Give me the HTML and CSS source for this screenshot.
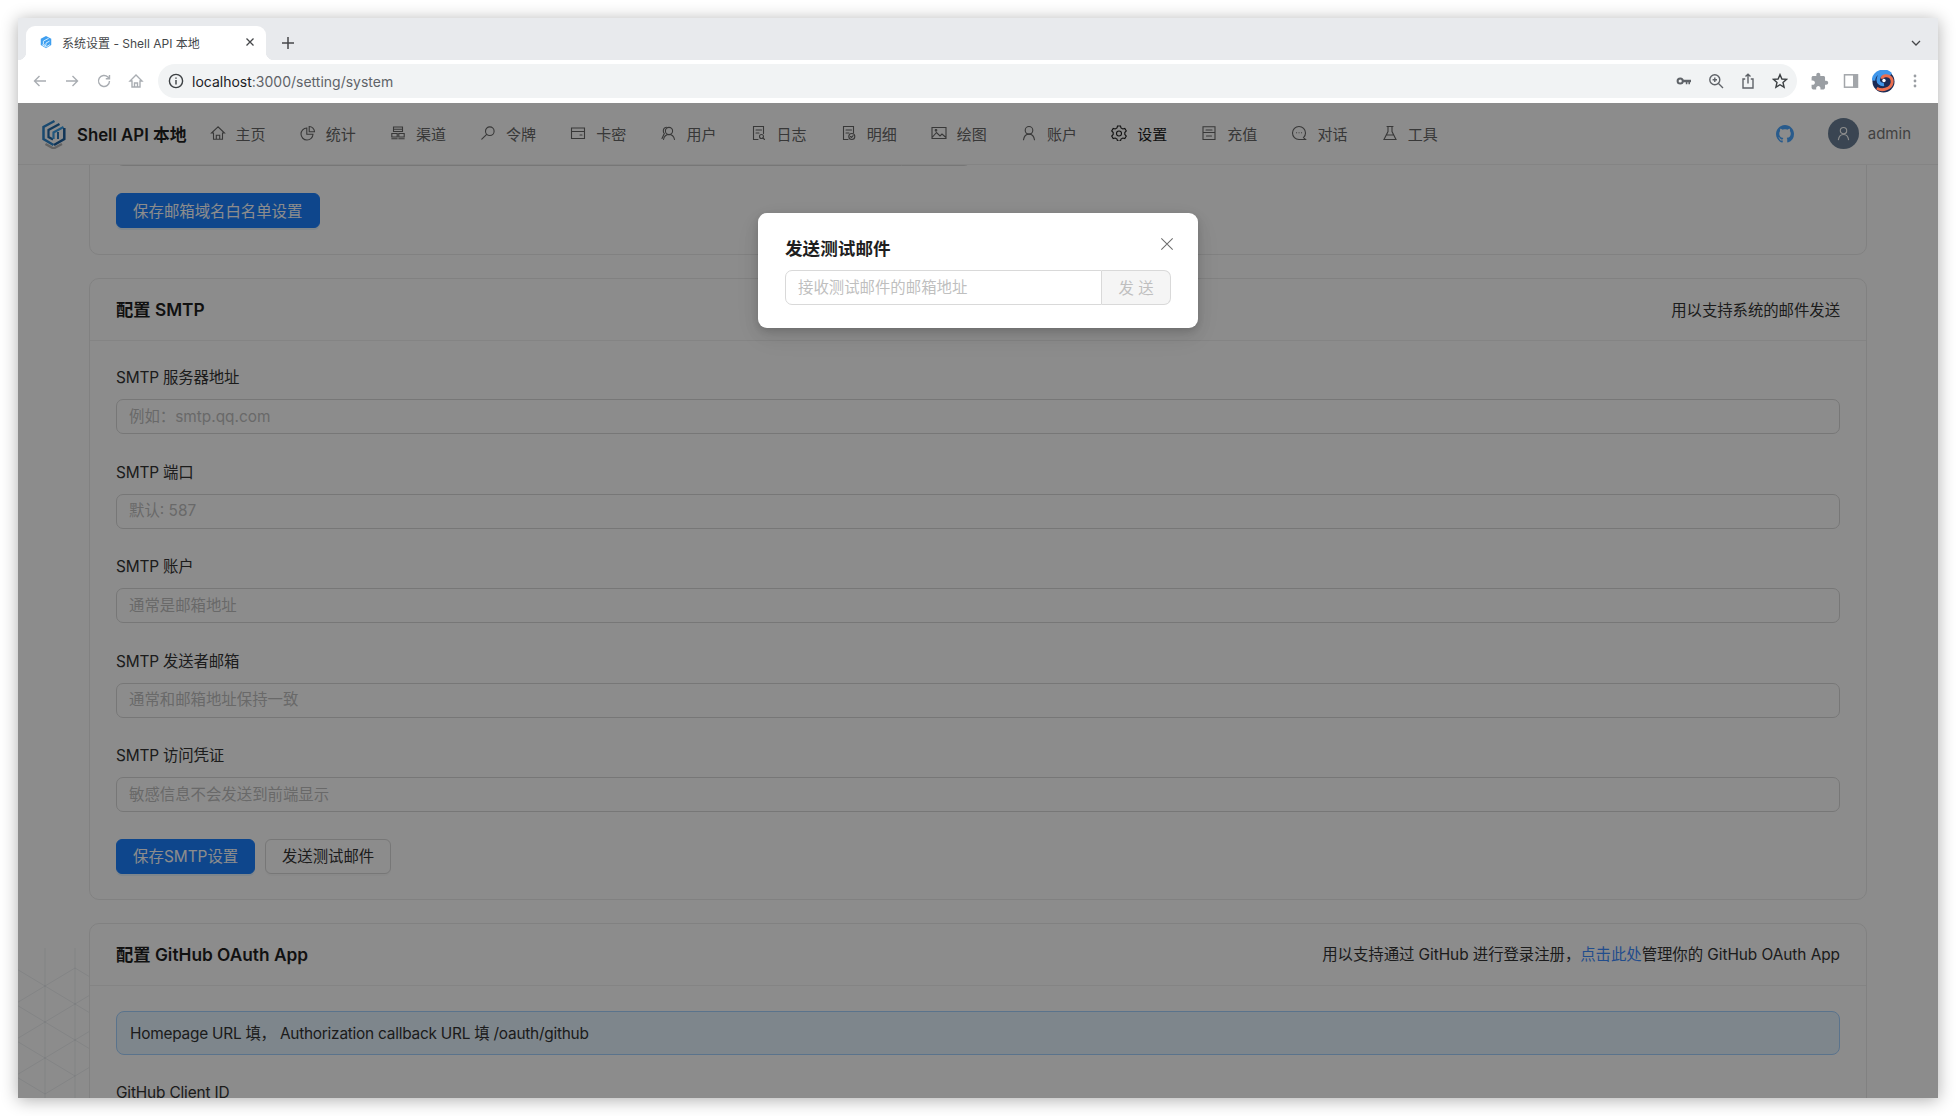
FILE: index.html
```html
<!DOCTYPE html>
<html lang="zh">
<head>
<meta charset="utf-8">
<title>系统设置 - Shell API 本地</title>
<link rel="stylesheet" href="styles.css">
</head>
<body>
<div class="window">
  <div class="tabstrip">
    <div class="tab">
      <svg class="favicon" viewBox="0 0 16 16"><path d="M8 1l6 3.4v7L8 15l-6-3.6v-7z" fill="#3f9ff0"/><path d="M11 3.800L5 7v3.500l3 1.800M12 7l-4 2.200V12M3.500 11l4.500 2.800 4.500-2.800" fill="none" stroke="#d8f0ff" stroke-width="1.100"/></svg>
      <span class="tab-title">系统设置 - Shell API 本地</span>
      <svg class="tab-close" viewBox="0 0 10 10"><path d="M1.500 1.500l7 7M8.500 1.500l-7 7" stroke="#45474a" stroke-width="1.300" fill="none"/></svg>
    </div>
    <svg class="tab-new" viewBox="0 0 14 14"><path d="M7 1v12M1 7h12" stroke="#45474a" stroke-width="1.500" fill="none"/></svg>
    <svg class="tab-more" viewBox="0 0 12 12"><path d="M2 4l4 4 4-4" stroke="#45474a" stroke-width="1.300" fill="none"/></svg>
  </div>

  <div class="toolbar">
    <span class="tool"><svg viewBox="0 0 16 16"><path d="M14 8H2.500M7.500 3L2.500 8l5 5" class="ln-off"/></svg></span>
    <span class="tool"><svg viewBox="0 0 16 16"><path d="M2 8h11.500M8.500 3l5 5-5 5" class="ln-off"/></svg></span>
    <span class="tool"><svg viewBox="0 0 16 16"><path d="M13.500 8a5.500 5.500 0 1 1-1.600-3.900L13.500 5.700M13.500 2v3.700H9.800" class="ln-off"/></svg></span>
    <span class="tool"><svg viewBox="0 0 16 16"><path d="M8 2L2 8h2v6h8V8h2zM6.500 14V10h3v4" class="ln-off"/></svg></span>
    <div class="omnibox">
      <svg class="info" viewBox="0 0 16 16"><circle cx="8" cy="8" r="6.600" class="ln-dark"/><path d="M8 7v4.400M8 4.400v1.400" class="ln-dark"/></svg>
      <span class="url">localhost<span class="url-rest">:3000/setting/system</span></span>
      <span class="tool"><svg viewBox="0 0 16 16"><circle cx="4.200" cy="8" r="2.600" fill="none" stroke="#5f6368" stroke-width="2"/><path d="M6.500 6.800H15v2.400h-1v2h-1.600v-2h-1v2H9.800v-2H6.500z" fill="#5f6368"/></svg></span>
      <span class="tool"><svg viewBox="0 0 16 16"><circle cx="6.800" cy="6.800" r="5" class="ln-mid"/><path d="M10.500 10.500L15 15M6.800 4.600v4.400M4.600 6.800H9" class="ln-mid"/></svg></span>
      <span class="tool"><svg viewBox="0 0 16 16"><path d="M5.200 6H3v9h10V6h-2.200M8 10.500V1.200M5.500 3.600L8 1.200l2.500 2.400" class="ln-mid"/></svg></span>
      <span class="tool"><svg viewBox="0 0 16 16"><path d="M8 1.600l1.900 4.400 4.700.4-3.600 3.100 1.100 4.700L8 11.700l-4.100 2.500L5 9.500 1.400 6.400l4.700-.4z" class="ln-dark"/></svg></span>
    </div>
    <span class="tool"><svg class="puzzle" viewBox="0 0 24 24"><path fill="#9a9ea3" d="M20.500 11H19V7c0-1.100-.9-2-2-2h-4V3.500C13 2.120 11.880 1 10.500 1S8 2.120 8 3.500V5H4c-1.100 0-1.990.9-1.990 2v3.800H3.500c1.490 0 2.700 1.210 2.700 2.700s-1.210 2.700-2.700 2.700H2V20c0 1.100.9 2 2 2h3.800v-1.500c0-1.490 1.210-2.700 2.700-2.700 1.490 0 2.700 1.210 2.700 2.700V22H17c1.100 0 2-.9 2-2v-4h1.500c1.380 0 2.500-1.120 2.500-2.500S21.880 11 20.500 11z"/></svg></span>
    <span class="tool"><svg viewBox="0 0 16 16"><rect x="1.500" y="1.800" width="13" height="12.400" fill="none" stroke="#a3a6aa" stroke-width="1.500"/><rect x="10" y="1.800" width="4.500" height="12.400" fill="#a3a6aa"/></svg></span>
    <span class="tool"><svg class="profile" viewBox="0 0 24 24"><circle cx="12" cy="12" r="11.500" fill="#1b2b55"/><path d="M1.500 11a10.500 10.500 0 0 1 18-6.500C14 2 7 4 6.500 10c-.2 3 2.500 5.500 6 5" fill="none" stroke="#3f96ea" stroke-width="3.600"/><path d="M5 19c6 3.500 15 .5 16-6 .6-4.500-3-7.500-7-7-2 .3-3.500 1.500-3.500 3" fill="none" stroke="#ec6f4e" stroke-width="3"/><circle cx="12.500" cy="11" r="1.800" fill="#fff"/></svg></span>
    <span class="tool"><svg viewBox="0 0 16 16"><circle cx="8" cy="3" r="1.400" fill="#9a9ea3"/><circle cx="8" cy="8" r="1.400" fill="#9a9ea3"/><circle cx="8" cy="13" r="1.400" fill="#9a9ea3"/></svg></span>
  </div>

  <div class="viewport">
    <svg class="decor" viewBox="0 0 72 150">
      <path d="M27 0v150M57 0v150M-3 20l30 18 30-18 30 18M-3 56l30-18 30 18 30-18M-3 56l30 18 30-18 30 18M-3 92l30-18 30 18 30-18M-3 92l30 18 30-18 30 18M-3 128l30-18 30 18 30-18M-3 128l30 18 30-18" fill="none" stroke="#8a93a3" stroke-opacity=".14"/>
    </svg>

    <header class="nav">
      <div class="brand">
        <svg class="logo" viewBox="0 0 26 30">
          <path d="M5 25l8 4.500 8.500-4.500" fill="none" stroke="#b4b4b4" stroke-width="2.400"/>
          <path d="M14 2L3 8v12l10 6" fill="none" stroke="#2f86cc" stroke-width="2.500"/>
          <path d="M19 5L8 11v7l4.500 2.500" fill="none" stroke="#2068a8" stroke-width="2.200"/>
          <path d="M23 8l-10 5.500V20" fill="none" stroke="#3b9ee6" stroke-width="2.200"/>
          <path d="M23.800 9v11L13.500 26" fill="none" stroke="#1f619e" stroke-width="2.500"/>
          <path d="M17.500 13v7" fill="none" stroke="#2a78ba" stroke-width="2"/>
        </svg>
        <span class="brand-name">Shell API 本地</span>
      </div>
      <nav class="menu">
        <a class="menu-item"><svg viewBox="0 0 16 16"><path d="M8 1.800L1.500 8h2v6.200h9V8h2zM6.300 14.200v-4h3.400v4"/></svg>主页</a>
        <a class="menu-item"><svg viewBox="0 0 16 16"><path d="M6.800 3a6 6 0 1 0 6.200 6.200H6.800zM9.200 1.500v5.300h5.300a5.300 5.300 0 0 0-5.300-5.300z"/></svg>统计</a>
        <a class="menu-item"><svg viewBox="0 0 16 16"><path d="M3.500 2h9v4.500h-9zM3.500 4.200h9M1.800 8.500h5.400v3.500H1.800zM8.800 8.500h5.400v3.500H8.800zM1.800 13.800h5.400M8.800 13.800h5.400"/></svg>渠道</a>
        <a class="menu-item"><svg viewBox="0 0 16 16"><circle cx="9.800" cy="6.200" r="4.300"/><path d="M6.700 9.300L1.800 14.200"/></svg>令牌</a>
        <a class="menu-item"><svg viewBox="0 0 16 16"><path d="M1.500 3h13v10.500h-13zM1.500 6.500h13M10 10h2"/></svg>卡密</a>
        <a class="menu-item"><svg viewBox="0 0 16 16"><circle cx="9" cy="6" r="3.600"/><path d="M3.500 14.500c.6-3 2.700-5 5.500-5s4.900 2 5.500 5M6.500 2.200C4.500 2.500 3.300 4 3.300 6c0 1 .4 1.900 1 2.600L2 13.500"/></svg>用户</a>
        <a class="menu-item"><svg viewBox="0 0 16 16"><path d="M7 14.500H2.500v-13h10v7M5 5h5.500M5 8h3"/><circle cx="10.500" cy="11.500" r="2"/><path d="M12 13l1.500 1.500"/></svg>日志</a>
        <a class="menu-item"><svg viewBox="0 0 16 16"><path d="M7 14.500H2.500v-13h10v6.500M5 5h5.500M5 8h3"/><circle cx="10.800" cy="11.500" r="3"/><path d="M9.500 11.500l1 1 1.600-1.800"/></svg>明细</a>
        <a class="menu-item"><svg viewBox="0 0 16 16"><path d="M1 2.500h14v11H1zM1.500 12l4-4.500 3.500 3.500 2-2 4 3.500"/><circle cx="5" cy="5.300" r=".8"/></svg>绘图</a>
        <a class="menu-item"><svg viewBox="0 0 16 16"><circle cx="8" cy="5.300" r="3.800"/><path d="M2.500 14.800c.5-3.200 2.700-5.700 5.500-5.700s5 2.500 5.500 5.700"/></svg>账户</a>
        <a class="menu-item is-active"><svg viewBox="0 0 16 16"><path d="M6.500 1h3l.5 2 1.800 1 2-.6 1.500 2.600-1.500 1.500v2l1.500 1.500-1.500 2.600-2-.6-1.800 1-.5 2h-3l-.5-2-1.800-1-2 .6L.7 11l1.500-1.500v-2L.7 6l1.500-2.600 2 .6L6 3z"/><circle cx="8" cy="8.500" r="2.500"/></svg>设置</a>
        <a class="menu-item"><svg viewBox="0 0 16 16"><path d="M2 1.800h12v12.700H2zM2 7.500h12M5 5h6M5.500 11h5"/></svg>充值</a>
        <a class="menu-item"><svg viewBox="0 0 16 16"><path d="M14.500 14.500H8a6.500 6.500 0 1 1 6.500-6.500c0 2-.8 3.500-2 4.600z"/><path d="M5.500 7.800h.1M8 7.800h.1M10.500 7.800h.1"/></svg>对话</a>
        <a class="menu-item"><svg viewBox="0 0 16 16"><path d="M5 1.500h6M6 1.500v5L2 14.500h12l-4-8v-5M4.500 10h7"/></svg>工具</a>
      </nav>
      <div class="nav-right">
        <svg class="github" viewBox="0 0 16 16"><path fill="currentColor" d="M8 0C3.580 0 0 3.580 0 8c0 3.540 2.290 6.530 5.470 7.590.4.070.55-.17.55-.38 0-.19-.01-.82-.01-1.490-2.010.37-2.530-.49-2.690-.94-.09-.23-.48-.94-.82-1.130-.28-.15-.68-.52-.01-.53.63-.01 1.080.58 1.230.82.720 1.210 1.870.870 2.330.660.070-.520.280-.870.510-1.070-1.780-.200-3.640-.890-3.640-3.950 0-.870.310-1.590.820-2.150-.080-.200-.360-1.020.080-2.120 0 0 .670-.210 2.200.820.640-.180 1.320-.270 2-.270s1.360.090 2 .270c1.530-1.040 2.200-.820 2.200-.820.440 1.100.160 1.920.080 2.120.510.560.820 1.270.820 2.150 0 3.070-1.870 3.750-3.650 3.950.290.250.540.730.540 1.480 0 1.070-.010 1.930-.010 2.200 0 .210.150.460.550.380A8.010 8.010 0 0 0 16 8c0-4.420-3.580-8-8-8z"/></svg>
        <span class="avatar"><svg viewBox="0 0 16 16"><circle cx="8" cy="5" r="3.400"/><path d="M2.500 15c.4-3.400 2.600-6 5.500-6s5.100 2.600 5.500 6"/></svg></span>
        <span class="username">admin</span>
      </div>
    </header>

    <main class="content">
      <section class="card card-clipped">
        <div class="card-body">
          <div class="input-group group-short">
            <input class="input group-input" type="text">
            <span class="group-addon"></span>
          </div>
          <div class="actions">
            <button class="btn btn-primary" type="button">保存邮箱域名白名单设置</button>
          </div>
        </div>
      </section>

      <section class="card">
        <div class="card-header">
          <h2 class="card-title">配置 SMTP</h2>
          <span class="card-extra">用以支持系统的邮件发送</span>
        </div>
        <div class="card-body">
          <div class="field"><label class="label">SMTP 服务器地址</label><input class="input" type="text" placeholder="例如：smtp.qq.com"></div>
          <div class="field"><label class="label">SMTP 端口</label><input class="input" type="text" placeholder="默认: 587"></div>
          <div class="field"><label class="label">SMTP 账户</label><input class="input" type="text" placeholder="通常是邮箱地址"></div>
          <div class="field"><label class="label">SMTP 发送者邮箱</label><input class="input" type="text" placeholder="通常和邮箱地址保持一致"></div>
          <div class="field"><label class="label">SMTP 访问凭证</label><input class="input" type="text" placeholder="敏感信息不会发送到前端显示"></div>
          <div class="actions">
            <button class="btn btn-primary" type="button">保存SMTP设置</button>
            <button class="btn btn-default" type="button">发送测试邮件</button>
          </div>
        </div>
      </section>

      <section class="card">
        <div class="card-header">
          <h2 class="card-title">配置 GitHub OAuth App</h2>
          <span class="card-extra">用以支持通过 GitHub 进行登录注册，<a class="link">点击此处</a>管理你的 GitHub OAuth App</span>
        </div>
        <div class="card-body">
          <div class="banner">Homepage URL 填， Authorization callback URL 填 /oauth/github</div>
          <div class="field"><label class="label">GitHub Client ID</label></div>
        </div>
      </section>
    </main>

    <div class="overlay">
      <div class="modal">
        <svg class="modal-close" viewBox="0 0 16 16"><path d="M1.500 1.500l13 13M14.500 1.500l-13 13" stroke="#6e6e6e" stroke-width="1.200" fill="none"/></svg>
        <h3 class="modal-title">发送测试邮件</h3>
        <div class="input-group">
          <input class="input group-input" type="text" placeholder="接收测试邮件的邮箱地址">
          <span class="group-addon">发 送</span>
        </div>
      </div>
    </div>
  </div>
</div>
</body>
</html>
```

FILE: styles.css
```css
* { box-sizing: border-box; }

html, body { margin: 0; height: 100%; }

body {
  padding: 18px;
  background: #fff;
  font-family: Inter, "Noto Sans CJK SC", sans-serif;
  font-size: 15.4px;
  color: #333;
  overflow: hidden;
}

.window {
  width: 1920px;
  height: 1080px;
  display: flex;
  flex-direction: column;
  overflow: hidden;
  box-shadow: 0 2px 16px rgba(0, 0, 0, .32);
}

/* Browser chrome */
.tabstrip {
  height: 42px;
  flex: none;
  display: flex;
  align-items: flex-end;
  padding-left: 8px;
  background: #e8eaed;
}

.tab {
  position: relative;
  width: 240px;
  height: 34px;
  display: flex;
  align-items: center;
  padding: 0 10px 2px 14px;
  background: #fff;
  border-radius: 9px 9px 0 0;
}

.tab::before,
.tab::after {
  content: "";
  position: absolute;
  bottom: 0;
  width: 8px;
  height: 8px;
}

.tab::before { left: -8px; background: radial-gradient(circle at 0 0, #e8eaed 8px, #fff 8.5px); }
.tab::after { right: -8px; background: radial-gradient(circle at 100% 0, #e8eaed 8px, #fff 8.5px); }

.favicon { width: 14px; height: 16px; flex: none; margin-left: -1px; }

.tab-title {
  flex: 1;
  margin-left: 9px;
  font-size: 12px;
  color: #45474a;
  white-space: nowrap;
}

.tab-close { width: 10px; height: 10px; flex: none; margin-right: 1px; }
.tab-new { width: 14px; height: 14px; flex: none; margin: 0 0 10px 15px; }
.tab-more { width: 12px; height: 12px; flex: none; margin: 0 16px 11px auto; }

.toolbar {
  height: 43px;
  flex: none;
  display: flex;
  align-items: flex-start;
  padding: 4px 6px 0;
  background: #fff;
}

.tool {
  width: 32px;
  height: 34px;
  flex: none;
  display: flex;
  align-items: center;
  justify-content: center;
}

.tool svg { width: 16px; height: 16px; }
.tool .profile { width: 23px; height: 23px; }
.tool .puzzle { width: 19px; height: 19px; }

.omnibox {
  width: 1639px;
  height: 34px;
  flex: none;
  display: flex;
  align-items: center;
  margin: 0 6px;
  padding: 0 1px 0 10px;
  background: #f1f3f4;
  border-radius: 17px;
}

.info { width: 16px; height: 16px; flex: none; margin-right: 8px; }

.url { flex: 1; font-size: 14px; color: #202124; }
.url-rest { color: #5f6368; }

.ln-off, .ln-dark, .ln-mid { fill: none; stroke-width: 1.4; }
.ln-off { stroke: #a9adb2; }
.ln-dark { stroke: #3c4043; }
.ln-mid { stroke: #5f6368; }

/* Page */
.viewport {
  position: relative;
  flex: 1;
  min-height: 0;
  display: flex;
  flex-direction: column;
  overflow: hidden;
  background: #fff;
}

.decor {
  position: absolute;
  left: 0;
  bottom: 0;
  width: 72px;
  height: 150px;
}

.nav {
  position: relative;
  z-index: 1;
  height: 62px;
  flex: none;
  display: flex;
  align-items: center;
  padding: 0 27px 0 22px;
  background: #fff;
  border-bottom: 1px solid #f0f0f0;
}

.brand { display: flex; align-items: center; flex: none; }
.logo { width: 27px; height: 30px; flex: none; }

.brand-name {
  margin-left: 10px;
  font-size: 16.8px;
  font-weight: 600;
  color: #1f1f1f;
  white-space: nowrap;
}

.menu {
  display: flex;
  gap: 34.15px;
  margin-left: 23px;
  padding-bottom: 1px;
}

.menu-item {
  display: flex;
  align-items: center;
  gap: 10px;
  font-size: 15px;
  color: #666;
  white-space: nowrap;
}

.menu-item svg {
  width: 16px;
  height: 16px;
  flex: none;
  fill: none;
  stroke: currentColor;
  stroke-width: 1.1;
  stroke-linecap: round;
}

.menu-item.is-active { color: #222; }

.nav-right {
  display: flex;
  align-items: center;
  margin-left: auto;
}

.github { width: 18px; height: 18px; color: #4ca7ff; }

.avatar {
  width: 31px;
  height: 31px;
  display: flex;
  align-items: center;
  justify-content: center;
  margin-left: 34px;
  border-radius: 50%;
  background: #6a7f95;
}

.avatar svg {
  width: 15px;
  height: 15px;
  fill: none;
  stroke: #fff;
  stroke-width: 1.2;
}

.username { margin-left: 9px; font-size: 15px; color: #777; }

.content {
  flex: 1;
  min-height: 0;
  display: flex;
  flex-direction: column;
  gap: 23px;
  padding: 0 71px;
}

.card {
  position: relative;
  flex: none;
  background: #fff;
  border: 1px solid #ececec;
  border-radius: 10px;
}

.card-clipped { margin-top: -51px; }
.card-clipped .card-body { padding-top: 16px; padding-bottom: 26px; }

.card-header {
  height: 62px;
  display: flex;
  align-items: center;
  justify-content: space-between;
  padding: 0 26px 2px;
  border-bottom: 1px solid #f0f0f0;
}

.card-title {
  margin: 0;
  font-size: 17.3px;
  font-weight: 600;
  color: #1f1f1f;
}

.card-extra { letter-spacing: -.003em; color: #333; }
.link { color: #3f8cff; }

.card-body { padding: 25px 26px 25px; }

.field { margin-bottom: 26.5px; }

.label {
  display: block;
  height: 22px;
  margin-bottom: 11px;
  line-height: 24px;
  letter-spacing: -.01em;
  color: #333;
}

.input {
  display: block;
  width: 100%;
  height: 35px;
  padding: 0 12px 1px;
  font: inherit;
  color: #333;
  background: #fff;
  border: 1px solid #d9d9d9;
  border-radius: 7px;
  outline: none;
}

.input::placeholder { color: #bfbfbf; opacity: 1; }

.actions { display: flex; gap: 9.5px; }

.btn {
  height: 35px;
  padding: 0 16.1px 2px;
  font: inherit;
  border-radius: 6px;
  white-space: nowrap;
}

.btn-primary {
  color: #fff;
  background: #1a80ff;
  border: 1px solid #1a80ff;
  box-shadow: 0 2px 0 rgba(5, 145, 255, .1);
}

.btn-default {
  color: #333;
  background: #fff;
  border: 1px solid #d9d9d9;
  box-shadow: 0 2px 0 rgba(0, 0, 0, .02);
}

.input-group { display: flex; height: 35px; }

.group-input {
  flex: 1;
  min-width: 0;
  border-radius: 7px 0 0 7px;
}

.group-addon {
  width: 69px;
  flex: none;
  display: flex;
  align-items: center;
  justify-content: center;
  padding-bottom: 1px;
  color: #bfbfbf;
  background: #f5f5f5;
  border: 1px solid #d9d9d9;
  border-left: 0;
  border-radius: 0 7px 7px 0;
}

.group-short { width: 855px; margin-bottom: 27px; }

.banner {
  height: 44px;
  display: flex;
  align-items: center;
  margin-bottom: 26px;
  padding: 0 13px 2px;
  background: #e6f4ff;
  border: 1px solid #a4d2ff;
  border-radius: 8px;
  letter-spacing: -.015em;
  color: #333;
}

/* Dialog */
.overlay {
  position: absolute;
  inset: 0;
  z-index: 2;
  display: flex;
  justify-content: center;
  align-items: flex-start;
  padding-top: 110px;
  background: rgba(0, 0, 0, .45);
}

.modal {
  position: relative;
  width: 440px;
  height: 115px;
  padding: 23px 27px 22px;
  background: #fff;
  border-radius: 9px;
  box-shadow: 0 6px 16px rgba(0, 0, 0, .08), 0 3px 6px rgba(0, 0, 0, .12), 0 9px 28px rgba(0, 0, 0, .05);
}

.modal-title {
  height: 24px;
  margin: 0 0 10px;
  font-size: 17.6px;
  font-weight: 600;
  line-height: 25px;
  color: #1f1f1f;
}

.modal-close {
  position: absolute;
  top: 24px;
  right: 24px;
  width: 14px;
  height: 14px;
}
```
